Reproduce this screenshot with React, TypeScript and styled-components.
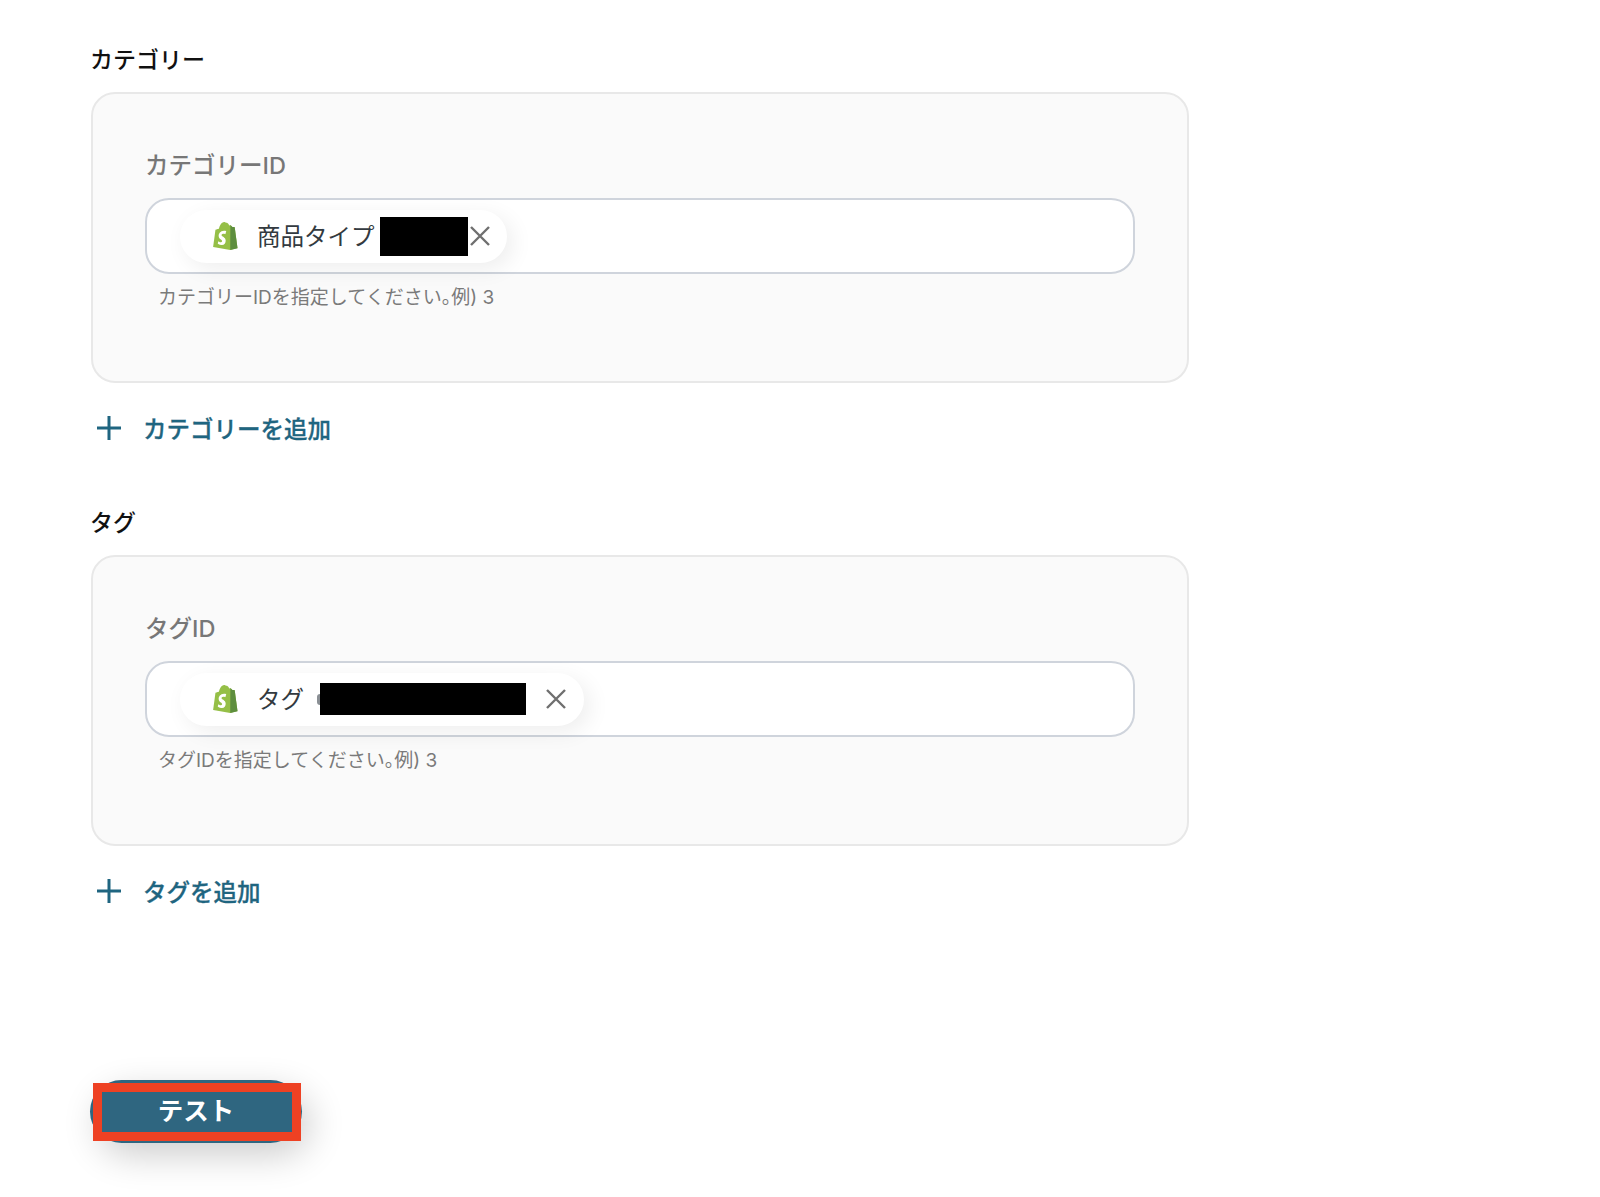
import React from 'react';
import styled, { createGlobalStyle } from 'styled-components';

const GlobalStyle = createGlobalStyle`
  html, body { margin: 0; padding: 0; background: #fff; }
  body { font-family: Inter, "Noto Sans CJK JP", sans-serif; }
  * { box-sizing: border-box; }
`;

const Page = styled.div`
  width: 1600px;
  height: 1197px;
  padding: 44px 0 0 91px;
  display: flex;
  flex-direction: column;
  overflow: hidden;
`;

const Group = styled.section`
  width: 1098px;
  display: flex;
  flex-direction: column;
  margin-bottom: 62px;
`;

const GroupTitle = styled.h2`
  margin: 0 0 16px -1px;
  font-size: 23px;
  line-height: 32px;
  font-weight: 500;
  color: #111;
`;

const Card = styled.div`
  height: 291px;
  padding: 56px 52px 0;
  background: #fafafa;
  border: 2px solid #e8e8e8;
  border-radius: 24px;
`;

const FieldLabel = styled.div`
  font-size: 23.5px;
  line-height: 32px;
  font-weight: 500;
  color: #777;
  margin-bottom: 16px;
`;

const InputBox = styled.div`
  height: 76px;
  padding: 0 33px;
  display: flex;
  align-items: center;
  background: #fff;
  border: 2px solid #cfd4dc;
  border-radius: 24px;
`;

const Chip = styled.div<{ $width: number }>`
  width: ${p => p.$width}px;
  height: 53px;
  display: flex;
  align-items: center;
  padding-left: 33px;
  background: #fff;
  border-radius: 27px;
  box-shadow: 6px 6px 22px rgba(0, 0, 0, 0.07);
  font-size: 23.5px;
  color: #333a40;
`;

const ChipIcon = styled.svg`
  width: 25px;
  height: 28px;
  flex: none;
  margin-right: 19px;
`;

const ChipText = styled.span<{ $gap: number }>`
  flex: none;
  margin: 0 ${p => p.$gap}px 2px 0;
`;

const Sliver = styled.span`
  flex: none;
  width: 3px;
  height: 11px;
  border-radius: 3px 0 0 3px;
  background: #8a8f94;
`;

const Redaction = styled.div<{ $width: number; $height: number }>`
  flex: none;
  width: ${p => p.$width}px;
  height: ${p => p.$height}px;
  background: #000;
`;

const CloseIcon = styled.svg<{ $gap: number }>`
  flex: none;
  width: 24px;
  height: 24px;
  margin-left: ${p => p.$gap}px;
`;

const HelpText = styled.div`
  margin: 11px 0 0 13px;
  font-size: 19px;
  line-height: 26px;
  color: #7a7a7a;
`;

const Punct = styled.span`
  font-feature-settings: "halt";
`;

const AddRow = styled.div`
  margin-top: 28px;
  display: flex;
  align-items: center;
  height: 34px;
  padding-left: 5px;
  color: #1f6580;
  font-size: 23.5px;
  font-weight: 500;
  -webkit-text-stroke: 0.3px #1f6580;
`;

const PlusIcon = styled.svg`
  width: 26px;
  height: 26px;
  margin-right: 21px;
`;

const Footer = styled.div`
  position: relative;
  margin: 110px 0 0 -1px;
  width: 212px;
  height: 63px;
`;

const TestButton = styled.div`
  width: 100%;
  height: 100%;
  padding-bottom: 6px;
  display: flex;
  align-items: center;
  justify-content: center;
  background: #2f6680;
  border-radius: 32px;
  box-shadow: 8px 12px 36px rgba(0, 0, 0, 0.2);
  color: #fff;
  font-size: 25.5px;
  font-weight: 700;
`;

const Highlight = styled.div`
  position: absolute;
  left: 3px;
  top: 3px;
  width: 208px;
  height: 58px;
  border: 9px solid #ee4123;
`;

const ShopifyLogo = () => (
  <ChipIcon viewBox="0 0 109.5 124.5">
    <path
      fill="#95bf47"
      d="M95.9 23.9c-.1-.6-.6-1-1.1-1s-9.3-.2-9.3-.2-7.4-7.2-8.1-7.9-2.2-.5-2.7-.3l-3.7 1.1c-.4-1.3-1-2.8-1.8-4.4-2.6-5-6.5-7.7-11.1-7.7-.3 0-.6 0-1 .1-.1-.2-.3-.3-.4-.5C54.7.9 52.1-.1 49 0c-6 .2-12 4.5-16.8 12.2-3.4 5.4-6 12.2-6.7 17.5-6.9 2.1-11.7 3.6-11.8 3.7-3.5 1.1-3.6 1.2-4 4.5C9.4 40.4.2 110.9.2 110.9l75.6 13.1 32.8-8.2S95.9 24.5 95.9 23.9z"
    />
    <path
      fill="#5e8e3e"
      d="M94.8 22.9c-.5 0-9.3-.2-9.3-.2s-7.4-7.2-8.1-7.9c-.3-.3-.6-.4-1-.5l-.6 110.2 32.8-8.2S95.9 24.5 95.9 23.9c-.1-.6-.6-1-1.1-1z"
    />
    <path
      fill="#fff"
      d="M58 39.9l-3.8 14.3s-4.3-2-9.4-1.6c-7.5.5-7.5 5.2-7.5 6.4.4 6.4 17.3 7.8 18.3 22.9.7 11.9-6.3 20-16.4 20.6-12.2.8-18.9-6.4-18.9-6.4l2.6-11s6.7 5.1 12.1 4.7c3.5-.2 4.8-3.1 4.7-5.1-.5-8.4-14.3-7.9-15.2-21.7-.7-11.6 6.9-23.4 23.7-24.4 6.4-.5 9.8 1.3 9.8 1.3z"
    />
  </ChipIcon>
);

const Close = ({ gap }: { gap: number }) => (
  <CloseIcon $gap={gap} viewBox="0 0 24 24">
    <path d="M3 3l18 18M21 3L3 21" stroke="#6f6f6f" strokeWidth="2.4" fill="none" />
  </CloseIcon>
);

const fields = [
  {
    title: 'カテゴリー',
    label: 'カテゴリーID',
    chip: '商品タイプ',
    chipWidth: 327,
    textGap: 5,
    sliver: false,
    redaction: 88,
    redactionHeight: 39,
    closeGap: 0,
    help: 'カテゴリーIDを指定してください',
    add: 'カテゴリーを追加',
  },
  {
    title: 'タグ',
    label: 'タグID',
    chip: 'タグ',
    chipWidth: 404,
    textGap: 13,
    sliver: true,
    redaction: 206,
    redactionHeight: 32,
    closeGap: 18,
    help: 'タグIDを指定してください',
    add: 'タグを追加',
  },
];

function App() {
  return (
    <>
      <GlobalStyle />
      <Page>
        {fields.map(f => (
          <Group key={f.title}>
            <GroupTitle>{f.title}</GroupTitle>
            <Card>
              <FieldLabel>{f.label}</FieldLabel>
              <InputBox>
                <Chip $width={f.chipWidth}>
                  <ShopifyLogo />
                  <ChipText $gap={f.textGap}>{f.chip}</ChipText>
                  {f.sliver && <Sliver />}
                  <Redaction $width={f.redaction} $height={f.redactionHeight} />
                  <Close gap={f.closeGap} />
                </Chip>
              </InputBox>
              <HelpText>
                {f.help}
                <Punct>。</Punct>例) 3
              </HelpText>
            </Card>
            <AddRow>
              <PlusIcon viewBox="0 0 26 26">
                <path d="M13 1v24M1 13h24" stroke="#1f6580" strokeWidth="3" fill="none" />
              </PlusIcon>
              {f.add}
            </AddRow>
          </Group>
        ))}
        <Footer>
          <TestButton>テスト</TestButton>
          <Highlight />
        </Footer>
      </Page>
    </>
  );
}

export default App;
